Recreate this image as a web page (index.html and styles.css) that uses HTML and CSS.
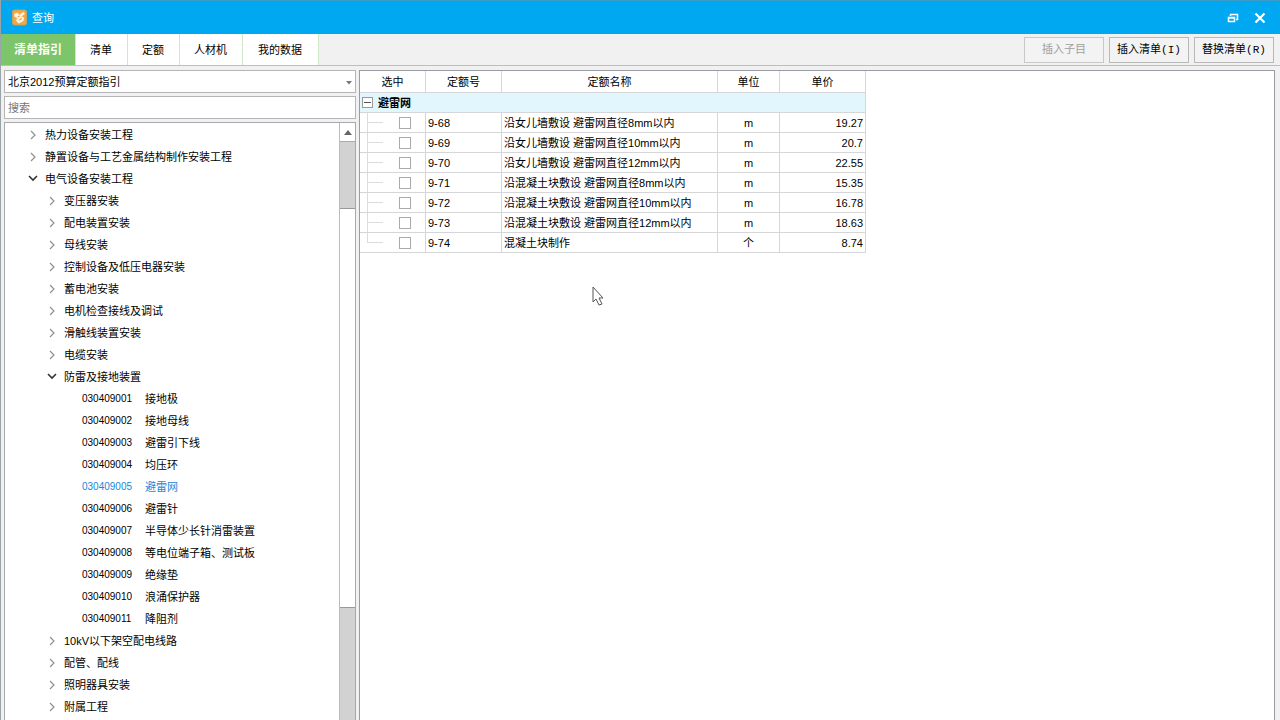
FILE: index.html
```html
<!DOCTYPE html>
<html lang="zh-CN">
<head>
<meta charset="utf-8">
<title>查询</title>
<link rel="stylesheet" href="styles.css">
</head>
<body>
<div class="window">
  <header class="titlebar">
    <svg class="logo" viewBox="0 0 16 17" aria-hidden="true">
      <rect x="0.5" y="0.5" width="15" height="16" rx="2" fill="#efa844" stroke="#c9a35c"/>
      <path d="M2.5 4.5l4-1 1 2.500 4.500-3.500 2 2-4 3 3 1-1 4-5 2.500-3-3.500 2-2-3.500-2z" fill="#fff3e0"/>
      <path d="M6 8l2-1M7.500 11.500l3-2" stroke="#efa844" stroke-width="1.3"/>
    </svg>
    <h1 class="title">查询</h1>
    <div class="window-actions">
      <button class="window-button" aria-label="还原">
        <svg viewBox="0 0 12 12" width="12" height="12"><path d="M3.5 4V2.5h7v5H9M3 2.5h8" fill="none" stroke="#fff" stroke-width="1.5"/><path d="M1.500 5.500h6v4h-6zM1 6h7" fill="none" stroke="#fff" stroke-width="1.5"/></svg>
      </button>
      <button class="window-button" aria-label="关闭">
        <svg viewBox="0 0 12 12" width="12" height="12"><path d="M1.500 1.500l9 9M10.500 1.500l-9 9" stroke="#fff" stroke-width="2.2"/></svg>
      </button>
    </div>
  </header>

  <div class="toolbar">
    <nav class="tabs">
      <button class="tab tab-active">清单指引</button>
      <button class="tab">清单</button>
      <button class="tab">定额</button>
      <button class="tab">人材机</button>
      <button class="tab">我的数据</button>
    </nav>
    <div class="actions">
      <button class="action" disabled>插入子目</button>
      <button class="action">插入清单(I)</button>
      <button class="action">替换清单(R)</button>
    </div>
  </div>

  <main class="content">
    <aside class="sidebar">
      <div class="combo">
        <select class="field" aria-label="定额库"><option>北京2012预算定额指引</option></select>
        <svg class="combo-arrow" viewBox="0 0 6 4" aria-hidden="true"><path d="M0 0h6L3 3.5z" fill="#777"/></svg>
      </div>
      <input class="field" type="text" placeholder="搜索" aria-label="搜索">
      <div class="tree-panel">
        <ul class="tree">
          <li><button class="node"><svg class="chevron" viewBox="0 0 10 10"><path d="M3 1l4 4-4 4"/></svg>热力设备安装工程</button></li>
          <li><button class="node"><svg class="chevron" viewBox="0 0 10 10"><path d="M3 1l4 4-4 4"/></svg>静置设备与工艺金属结构制作安装工程</button></li>
          <li><button class="node" aria-expanded="true"><svg class="chevron chevron-open" viewBox="0 0 10 10"><path d="M1 2l4 4 4-4"/></svg>电气设备安装工程</button>
            <ul class="branch">
              <li><button class="node"><svg class="chevron" viewBox="0 0 10 10"><path d="M3 1l4 4-4 4"/></svg>变压器安装</button></li>
              <li><button class="node"><svg class="chevron" viewBox="0 0 10 10"><path d="M3 1l4 4-4 4"/></svg>配电装置安装</button></li>
              <li><button class="node"><svg class="chevron" viewBox="0 0 10 10"><path d="M3 1l4 4-4 4"/></svg>母线安装</button></li>
              <li><button class="node"><svg class="chevron" viewBox="0 0 10 10"><path d="M3 1l4 4-4 4"/></svg>控制设备及低压电器安装</button></li>
              <li><button class="node"><svg class="chevron" viewBox="0 0 10 10"><path d="M3 1l4 4-4 4"/></svg>蓄电池安装</button></li>
              <li><button class="node"><svg class="chevron" viewBox="0 0 10 10"><path d="M3 1l4 4-4 4"/></svg>电机检查接线及调试</button></li>
              <li><button class="node"><svg class="chevron" viewBox="0 0 10 10"><path d="M3 1l4 4-4 4"/></svg>滑触线装置安装</button></li>
              <li><button class="node"><svg class="chevron" viewBox="0 0 10 10"><path d="M3 1l4 4-4 4"/></svg>电缆安装</button></li>
              <li><button class="node" aria-expanded="true"><svg class="chevron chevron-open" viewBox="0 0 10 10"><path d="M1 2l4 4 4-4"/></svg>防雷及接地装置</button>
                <ul class="branch">
                  <li><button class="node leaf"><span class="code">030409001</span>接地极</button></li>
                  <li><button class="node leaf"><span class="code">030409002</span>接地母线</button></li>
                  <li><button class="node leaf"><span class="code">030409003</span>避雷引下线</button></li>
                  <li><button class="node leaf"><span class="code">030409004</span>均压环</button></li>
                  <li><button class="node leaf selected"><span class="code">030409005</span>避雷网</button></li>
                  <li><button class="node leaf"><span class="code">030409006</span>避雷针</button></li>
                  <li><button class="node leaf"><span class="code">030409007</span>半导体少长针消雷装置</button></li>
                  <li><button class="node leaf"><span class="code">030409008</span>等电位端子箱、测试板</button></li>
                  <li><button class="node leaf"><span class="code">030409009</span>绝缘垫</button></li>
                  <li><button class="node leaf"><span class="code">030409010</span>浪涌保护器</button></li>
                  <li><button class="node leaf"><span class="code">030409011</span>降阻剂</button></li>
                </ul>
              </li>
              <li><button class="node"><svg class="chevron" viewBox="0 0 10 10"><path d="M3 1l4 4-4 4"/></svg>10kV以下架空配电线路</button></li>
              <li><button class="node"><svg class="chevron" viewBox="0 0 10 10"><path d="M3 1l4 4-4 4"/></svg>配管、配线</button></li>
              <li><button class="node"><svg class="chevron" viewBox="0 0 10 10"><path d="M3 1l4 4-4 4"/></svg>照明器具安装</button></li>
              <li><button class="node"><svg class="chevron" viewBox="0 0 10 10"><path d="M3 1l4 4-4 4"/></svg>附属工程</button></li>
            </ul>
          </li>
        </ul>
        <div class="scrollbar">
          <button class="scroll-up" aria-label="向上滚动"><svg viewBox="0 0 8 5" width="8" height="5"><path d="M0 5l4-5 4 5z" fill="#666"/></svg></button>
          <div class="scroll-before"></div>
          <div class="scroll-thumb"></div>
          <div class="scroll-after"></div>
        </div>
      </div>
    </aside>

    <section class="results">
      <table class="grid">
        <colgroup><col class="col-check"><col class="col-code"><col class="col-name"><col class="col-unit"><col class="col-price"></colgroup>
        <thead>
          <tr><th>选中</th><th>定额号</th><th>定额名称</th><th>单位</th><th>单价</th></tr>
        </thead>
        <tbody>
          <tr class="group"><td colspan="5"><div class="group-label"><button class="collapse" aria-label="折叠"></button>避雷网</div></td></tr>
          <tr><td class="pick"><input type="checkbox" aria-label="9-68"></td><td>9-68</td><td>沿女儿墙敷设 避雷网直径8mm以内</td><td class="unit">m</td><td class="price">19.27</td></tr>
          <tr><td class="pick"><input type="checkbox" aria-label="9-69"></td><td>9-69</td><td>沿女儿墙敷设 避雷网直径10mm以内</td><td class="unit">m</td><td class="price">20.7</td></tr>
          <tr><td class="pick"><input type="checkbox" aria-label="9-70"></td><td>9-70</td><td>沿女儿墙敷设 避雷网直径12mm以内</td><td class="unit">m</td><td class="price">22.55</td></tr>
          <tr><td class="pick"><input type="checkbox" aria-label="9-71"></td><td>9-71</td><td>沿混凝土块敷设 避雷网直径8mm以内</td><td class="unit">m</td><td class="price">15.35</td></tr>
          <tr><td class="pick"><input type="checkbox" aria-label="9-72"></td><td>9-72</td><td>沿混凝土块敷设 避雷网直径10mm以内</td><td class="unit">m</td><td class="price">16.78</td></tr>
          <tr><td class="pick"><input type="checkbox" aria-label="9-73"></td><td>9-73</td><td>沿混凝土块敷设 避雷网直径12mm以内</td><td class="unit">m</td><td class="price">18.63</td></tr>
          <tr><td class="pick pick-last"><input type="checkbox" aria-label="9-74"></td><td>9-74</td><td>混凝土块制作</td><td class="unit">个</td><td class="price">8.74</td></tr>
        </tbody>
      </table>
    </section>
  </main>
  <svg class="pointer" viewBox="0 0 12 20" aria-hidden="true"><path d="M1 1v15l3-3 3 6 3-1-3-6h4z" fill="#fff" stroke="#555"/></svg>
</div>
</body>
</html>
```
FILE: styles.css
```css
* { box-sizing: border-box; }

body {
  margin: 0;
  overflow: hidden;
  font: 11px/16px "Liberation Sans", "Noto Sans CJK SC", sans-serif;
  color: #000;
}

button, input, select { font: inherit; color: inherit; }
button { padding: 0; border: 0; background: none; }
ul { margin: 0; padding: 0; list-style: none; }

.window {
  display: flex;
  flex-direction: column;
  height: 100vh;
  background: #f1f1f1;
  border-left: 1px solid #9aa3a8;
}

.titlebar {
  display: flex;
  align-items: center;
  flex: none;
  height: 34px;
  padding: 0 14px 0 11px;
  gap: 5px;
  background: #00a8f2;
  border-top: 1px solid #3a9cc8;
  color: #fff;
}
.logo { width: 15px; height: 17px; }
.title { margin: 0; font-size: 11px; font-weight: 400; }
.window-actions { display: flex; gap: 15px; margin-left: auto; }
.window-button { display: flex; }

.toolbar {
  display: flex;
  justify-content: space-between;
  flex: none;
  height: 32px;
  border-bottom: 1px solid #a9cf9c;
}
.tabs { display: flex; }
.tab {
  padding: 0 15px 0 14px;
  background: #fff;
  border-right: 1px solid #cfe8c8;
}
.tab:last-child { padding: 0 16px 0 15px; }
.tab-active {
  padding: 0 13px;
  font-size: 12px;
  font-weight: 700;
  color: #fff;
  background: #7dc56b;
}
.actions { display: flex; align-items: center; gap: 5px; padding-right: 6px; }
.action {
  width: 80px;
  height: 26px;
  font-family: "Liberation Mono", "Noto Sans CJK SC", monospace;
  background: #f3f3f3;
  border: 1px solid #b8b8b8;
}
.action:disabled { color: #a0a0a0; border-color: #c8c8c8; }

.content {
  display: flex;
  flex: 1;
  min-height: 0;
  gap: 3px;
  padding: 4px 5px 0 3px;
}

.sidebar {
  display: flex;
  flex-direction: column;
  flex: none;
  width: 352px;
  gap: 3px;
}
.field {
  display: block;
  flex: none;
  width: 100%;
  height: 23px;
  padding: 0 3px;
  appearance: none;
  background: #fff;
  border: 1px solid #b5b5b8;
  border-radius: 0;
}
.field::placeholder { color: #777; opacity: 1; }
.combo { position: relative; }
.combo-arrow { position: absolute; right: 4px; top: 11px; width: 6px; height: 4px; }

.tree-panel {
  display: flex;
  flex: 1;
  min-height: 0;
  background: #fff;
  border: 1px solid #a9a9ad;
  border-bottom: 0;
}
.tree { flex: 1; min-width: 0; padding: 1px 0 0 23px; overflow: hidden; }
.branch { padding-left: 19px; }
.node {
  display: flex;
  align-items: center;
  height: 22px;
  gap: 7px;
  white-space: nowrap;
}
.chevron {
  width: 10px;
  height: 10px;
  fill: none;
  stroke: #909090;
  stroke-width: 1.2;
}
.chevron-open { stroke: #333; stroke-width: 1.6; }
.leaf { padding-left: 16px; gap: 0; }
.code { width: 63px; font-size: 10px; text-align: left; }
.selected { color: #1c86d8; }

.scrollbar {
  display: flex;
  flex-direction: column;
  width: 16px;
  background: #d2d2d2;
  border-left: 1px solid #bcbcbc;
}
.scroll-up {
  display: flex;
  align-items: center;
  justify-content: center;
  height: 19px;
  background: #fff;
  border-bottom: 1px solid #aaa;
}
.scroll-before { flex: 66; }
.scroll-thumb { flex: 400; background: #fff; border: solid #999; border-width: 1px 0; }
.scroll-after { flex: 113; }

.results {
  flex: 1;
  min-width: 0;
  background: #fff;
  border: 1px solid #999ca3;
  border-bottom: 0;
}
.grid {
  width: 506px;
  table-layout: fixed;
  border-collapse: separate;
  border-spacing: 0;
}
.col-check { width: 66px; }
.col-code { width: 76px; }
.col-name { width: 216px; }
.col-unit { width: 62px; }
.col-price { width: 86px; }
.grid th, .grid td {
  height: 20px;
  padding: 2px 2px 1px 2px;
  font-weight: 400;
  text-align: left;
  white-space: nowrap;
  border: solid #d6d6d8;
  border-width: 0 1px 1px 0;
}
.grid th { height: 22px; text-align: center; }
.grid .group td { padding: 0 0 0 2px; background: #e2f6fd; }
.group-label { display: flex; align-items: center; gap: 5px; font-weight: 700; }
.collapse {
  width: 11px;
  height: 11px;
  background: linear-gradient(#555, #555) center / 7px 1px no-repeat #fff;
  border: 1px solid #999;
}
.grid .unit { text-align: center; }
.grid .price { text-align: right; }
.grid .pick {
  padding: 0 0 0 39px;
  background:
    linear-gradient(#dcdcdc, #dcdcdc) 7px 0 / 1px 20px no-repeat,
    linear-gradient(#dcdcdc, #dcdcdc) 8px 9px / 15px 1px no-repeat;
}
.grid .pick-last {
  background:
    linear-gradient(#dcdcdc, #dcdcdc) 7px 0 / 1px 10px no-repeat,
    linear-gradient(#dcdcdc, #dcdcdc) 8px 9px / 15px 1px no-repeat;
}
.pick input {
  display: block;
  width: 12px;
  height: 12px;
  margin: 0;
  appearance: none;
  background: #fff;
  border: 1px solid #aaa;
}

.pointer { position: absolute; left: 592px; top: 286px; width: 12px; height: 20px; }
```
